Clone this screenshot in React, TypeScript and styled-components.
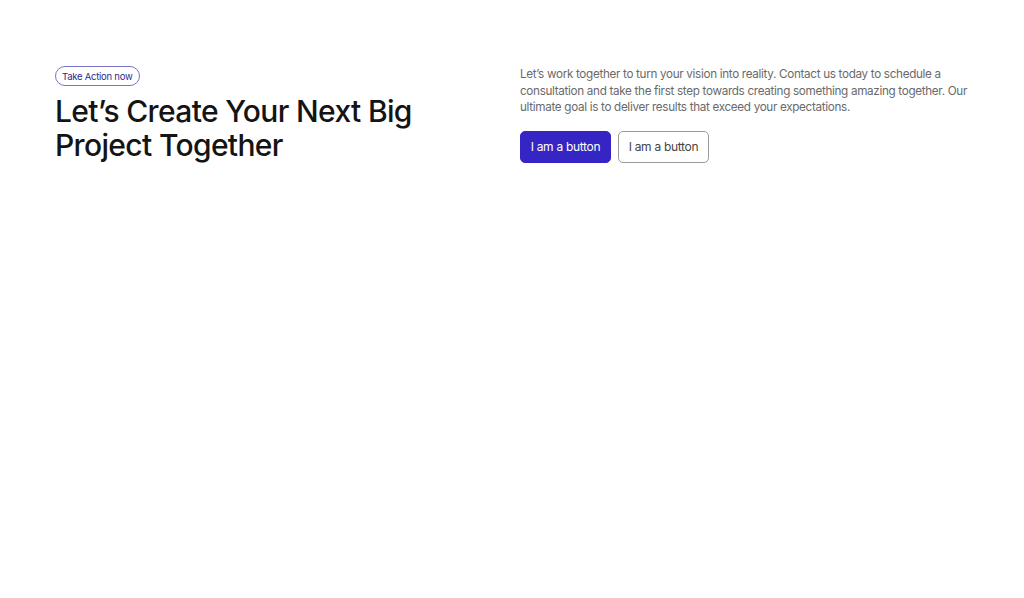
import styled, { createGlobalStyle } from 'styled-components';

const GlobalStyle = createGlobalStyle`
  html, body {
    margin: 0;
    padding: 0;
    background: #ffffff;
  }

  body {
    font-family: Inter, 'Noto Sans', 'Liberation Sans', sans-serif;
    color: #111111;
  }
`;

const Section = styled.section`
  display: grid;
  grid-template-columns: 1fr 1fr;
  gap: 16px;
  padding: 66px 55px 0;
`;

const Left = styled.div`
  display: flex;
  flex-direction: column;
  align-items: flex-start;
  gap: 8px;
`;

const Right = styled.div`
  display: flex;
  flex-direction: column;
  align-items: flex-start;
  gap: 15px;
`;

const Badge = styled.span`
  display: inline-flex;
  align-items: center;
  height: 18px;
  padding: 0 6px;
  border: 1px solid #7b72c9;
  border-radius: 999px;
  font-size: 9.5px;
  letter-spacing: -0.25px;
  color: #2f2a8a;
`;

const Title = styled.h1`
  margin: 0;
  font-size: 30px;
  line-height: 34px;
  font-weight: 500;
  letter-spacing: -0.65px;
  color: #141414;
`;

const Text = styled.p`
  margin: 0;
  font-size: 11.7px;
  line-height: 16.5px;
  letter-spacing: -0.32px;
  color: #6a6a6a;
`;

const Actions = styled.div`
  display: flex;
  gap: 7px;
`;

const Button = styled.button<{ $primary?: boolean }>`
  height: 32px;
  width: 91px;
  padding: 0;
  border-radius: 5px;
  font-family: inherit;
  font-size: 12px;
  letter-spacing: -0.3px;
  cursor: pointer;
  border: 1px solid ${(p) => (p.$primary ? '#3525c4' : '#9a9a9a')};
  background: ${(p) => (p.$primary ? '#3525c4' : '#ffffff')};
  color: ${(p) => (p.$primary ? '#ffffff' : '#444444')};
`;

export default function App() {
  return (
    <>
      <GlobalStyle />
      <Section>
        <Left>
          <Badge>Take Action now</Badge>
          <Title>
            Let’s Create Your Next Big
            <br />
            Project Together
          </Title>
        </Left>
        <Right>
          <Text>
            Let’s work together to turn your vision into reality. Contact us today to schedule a
            consultation and take the first step towards creating something amazing together. Our
            ultimate goal is to deliver results that exceed your expectations.
          </Text>
          <Actions>
            <Button $primary>I am a button</Button>
            <Button>I am a button</Button>
          </Actions>
        </Right>
      </Section>
    </>
  );
}
